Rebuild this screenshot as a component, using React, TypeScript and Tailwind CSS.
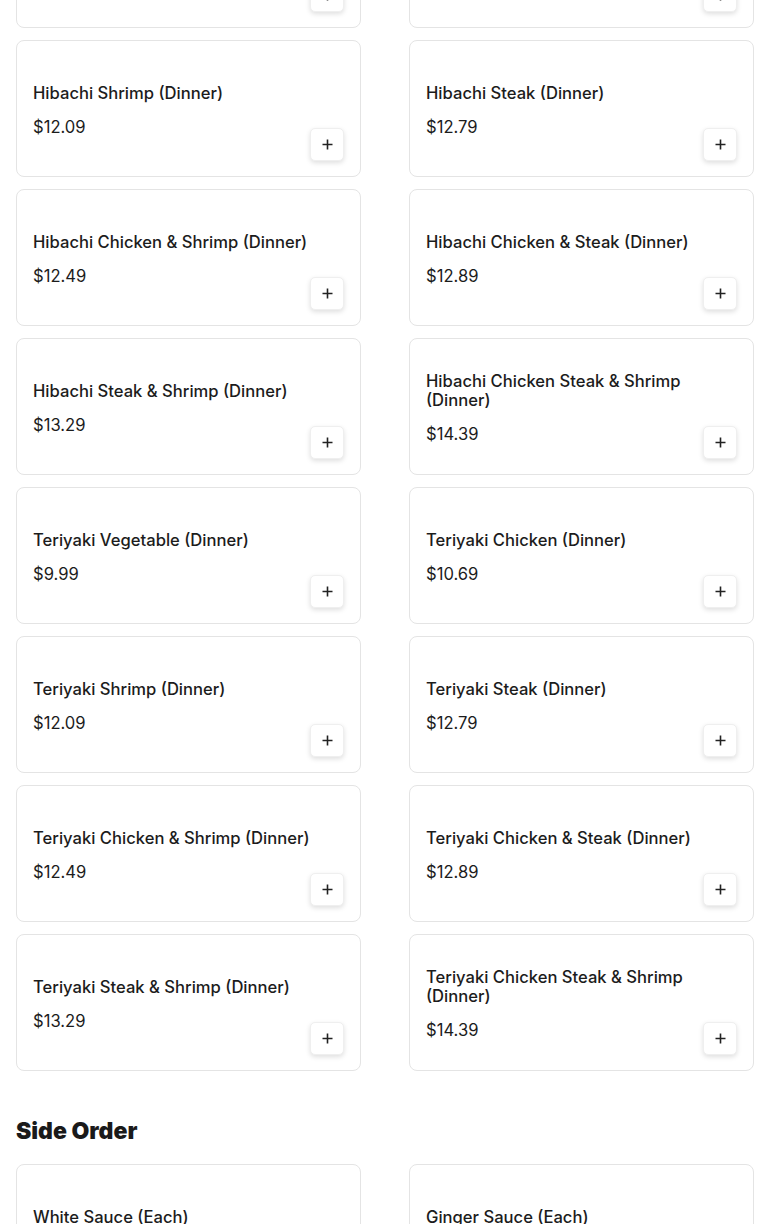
import React from 'react';

interface MenuItem {
  name: string;
  price: string;
}

const dinnerItems: MenuItem[] = [
  { name: 'Hibachi Vegetable (Dinner)', price: '$9.99' },
  { name: 'Hibachi Chicken (Dinner)', price: '$10.69' },
  { name: 'Hibachi Shrimp (Dinner)', price: '$12.09' },
  { name: 'Hibachi Steak (Dinner)', price: '$12.79' },
  { name: 'Hibachi Chicken & Shrimp (Dinner)', price: '$12.49' },
  { name: 'Hibachi Chicken & Steak (Dinner)', price: '$12.89' },
  { name: 'Hibachi Steak & Shrimp (Dinner)', price: '$13.29' },
  { name: 'Hibachi Chicken Steak & Shrimp (Dinner)', price: '$14.39' },
  { name: 'Teriyaki Vegetable (Dinner)', price: '$9.99' },
  { name: 'Teriyaki Chicken (Dinner)', price: '$10.69' },
  { name: 'Teriyaki Shrimp (Dinner)', price: '$12.09' },
  { name: 'Teriyaki Steak (Dinner)', price: '$12.79' },
  { name: 'Teriyaki Chicken & Shrimp (Dinner)', price: '$12.49' },
  { name: 'Teriyaki Chicken & Steak (Dinner)', price: '$12.89' },
  { name: 'Teriyaki Steak & Shrimp (Dinner)', price: '$13.29' },
  { name: 'Teriyaki Chicken Steak & Shrimp (Dinner)', price: '$14.39' },
];

const sideItems: MenuItem[] = [
  { name: 'White Sauce (Each)', price: '$0.75' },
  { name: 'Ginger Sauce (Each)', price: '$0.75' },
];

const PlusIcon = () => (
  <svg width="11" height="11" viewBox="0 0 11 11" fill="none">
    <path d="M5.5 0.5v10M0.5 5.5h10" stroke="#222" strokeWidth="1.6" />
  </svg>
);

const ItemCard: React.FC<{ item: MenuItem }> = ({ item }) => (
  <div className="relative flex h-[137px] flex-col justify-center rounded-lg border border-[#e4e4e4] bg-white px-4 pt-[3px]">
    <h3 className="pr-4 text-[16.6px] leading-[19px] font-medium text-[#1c1c1c]">{item.name}</h3>
    <p className="mt-[14px] text-[16.6px] leading-[20px] text-[#1c1c1c]">{item.price}</p>
    {/* add button sits in the bottom-right corner */}
    <button className="absolute right-4 bottom-[15px] flex h-[33px] w-[34px] items-center justify-center rounded-[5px] border border-[#efefef] bg-white shadow-[0_2px_5px_rgba(0,0,0,0.13)]">
      <PlusIcon />
    </button>
  </div>
);

export default function App() {
  return (
    <div
      className="h-[1224px] overflow-hidden bg-white"
      style={{ fontFamily: 'Inter, "Noto Sans", sans-serif' }}
    >
      <div className="-mt-[109px] px-4">
        <div className="grid grid-cols-2 gap-x-12 gap-y-3">
          {dinnerItems.map(item => (
            <ItemCard key={item.name} item={item} />
          ))}
        </div>

        <h2 className="mt-[44px] mb-[17px] text-[23px] leading-[32px] font-black text-[#1a1a1a]">
          Side Order
        </h2>

        <div className="grid grid-cols-2 gap-x-12 gap-y-3">
          {sideItems.map(item => (
            <ItemCard key={item.name} item={item} />
          ))}
        </div>
      </div>
    </div>
  );
}
